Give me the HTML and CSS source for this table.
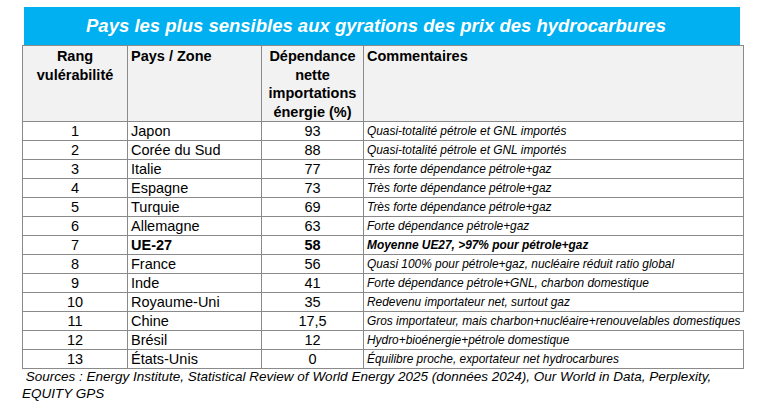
FILE: index.html
```html
<!DOCTYPE html>
<html lang="fr">
<head>
<meta charset="utf-8">
<link rel="stylesheet" href="styles.css">
</head>
<body>
<div class="page">
  <div class="title">Pays les plus sensibles aux gyrations des prix des hydrocarbures</div>
  <table class="grid">
    <colgroup>
      <col class="c-rank"><col class="c-country"><col class="c-dep"><col class="c-com">
    </colgroup>
    <thead>
      <tr>
        <th class="center">Rang<br>vulérabilité</th>
        <th class="left">Pays / Zone</th>
        <th class="center">Dépendance<br>nette<br>importations<br>énergie (%)</th>
        <th class="left">Commentaires</th>
      </tr>
    </thead>
    <tbody>
      <tr><td class="center">1</td><td>Japon</td><td class="center">93</td><td class="com">Quasi-totalité pétrole et GNL importés</td></tr>
      <tr><td class="center">2</td><td>Corée du Sud</td><td class="center">88</td><td class="com">Quasi-totalité pétrole et GNL importés</td></tr>
      <tr><td class="center">3</td><td>Italie</td><td class="center">77</td><td class="com">Très forte dépendance pétrole+gaz</td></tr>
      <tr><td class="center">4</td><td>Espagne</td><td class="center">73</td><td class="com">Très forte dépendance pétrole+gaz</td></tr>
      <tr><td class="center">5</td><td>Turquie</td><td class="center">69</td><td class="com">Très forte dépendance pétrole+gaz</td></tr>
      <tr><td class="center">6</td><td>Allemagne</td><td class="center">63</td><td class="com">Forte dépendance pétrole+gaz</td></tr>
      <tr class="bold"><td class="center norm">7</td><td>UE-27</td><td class="center">58</td><td class="com">Moyenne UE27, &gt;97% pour pétrole+gaz</td></tr>
      <tr><td class="center">8</td><td>France</td><td class="center">56</td><td class="com">Quasi 100% pour pétrole+gaz, nucléaire réduit ratio global</td></tr>
      <tr><td class="center">9</td><td>Inde</td><td class="center">41</td><td class="com">Forte dépendance pétrole+GNL, charbon domestique</td></tr>
      <tr><td class="center">10</td><td>Royaume-Uni</td><td class="center">35</td><td class="com">Redevenu importateur net, surtout gaz</td></tr>
      <tr><td class="center">11</td><td>Chine</td><td class="center">17,5</td><td class="com open">Gros importateur, mais charbon+nucléaire+renouvelables domestiques</td></tr>
      <tr><td class="center">12</td><td>Brésil</td><td class="center">12</td><td class="com">Hydro+bioénergie+pétrole domestique</td></tr>
      <tr><td class="center">13</td><td>États-Unis</td><td class="center">0</td><td class="com">Équilibre proche, exportateur net hydrocarbures</td></tr>
    </tbody>
  </table>
  <p class="sources">&nbsp;Sources : Energy Institute, Statistical Review of World Energy 2025 (données 2024), Our World in Data, Perplexity, EQUITY GPS</p>
</div>
</body>
</html>
```
FILE: styles.css
```css
html, body {
  margin: 0;
  padding: 0;
  background: #ffffff;
}
.page {
  padding: 7px 0 0 22px;
  width: 721px;
  font-family: "Liberation Sans", Arial, sans-serif;
  color: #000;
}
.title {
  margin: 0 3px 0 2px;
  height: 38px;
  background: #00b0f0;
  color: #fff;
  font-weight: bold;
  font-style: italic;
  font-size: 18.5px;
  line-height: 38px;
  text-align: center;
  padding-right: 12px;
}
.grid {
  border-collapse: collapse;
  table-layout: fixed;
  width: 721px;
  font-size: 14.5px;
}
.c-rank { width: 105px; }
.c-country { width: 134px; }
.c-dep { width: 102px; }
.c-com { width: 380px; }
.grid th, .grid td {
  border: 1px solid #8a8a8a;
  padding: 0 3px;
  white-space: nowrap;
}
.grid th {
  background: #f2f2f2;
  font-weight: bold;
  vertical-align: top;
  height: 76px;
  line-height: 18.5px;
  padding-top: 1px;
  box-sizing: border-box;
}
.grid td {
  height: 18px;
  line-height: 18px;
  box-sizing: border-box;
}
.center { text-align: center; }
.left { text-align: left; }
.com {
  font-style: italic;
  font-size: 11.9px;
}
.bold td { font-weight: bold; }
.bold td.norm { font-weight: normal; }
.open {
  overflow: visible;
  border-right: none !important;
}
.sources {
  margin: 0;
  padding-top: 0;
  font-style: italic;
  font-size: 13.5px;
  line-height: 16.5px;
  width: 700px;
}
```
